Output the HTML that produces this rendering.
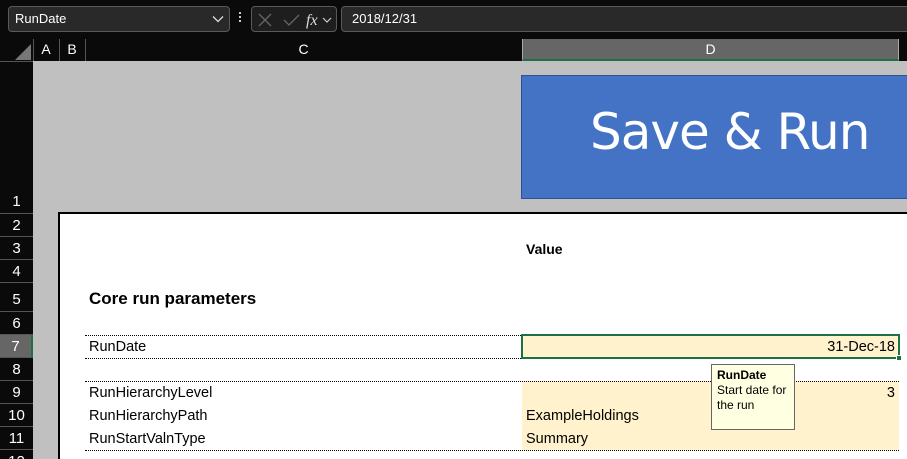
<!DOCTYPE html><html><head><style>
*{margin:0;padding:0;box-sizing:border-box}
html,body{width:907px;height:459px;overflow:hidden}
body{background:#0a0a0a;position:relative;font-family:"Liberation Sans",sans-serif}
.a{position:absolute}
.rn{position:absolute;left:0;width:33px;color:#fff;font-size:15px;text-align:center;border-bottom:1px solid #555}
.t{position:absolute;font-size:14.5px;color:#000;white-space:nowrap}
.dl{position:absolute;left:85px;width:814px;border-top:1px dotted #000}
</style></head><body>
<div class="a" style="left:8px;top:6px;width:222px;height:26px;background:#292929;border:1px solid #5a5a5a;border-radius:4px"></div>
<div class="a" style="left:15px;top:11px;color:#fff;font-size:13px">RunDate</div>
<svg class="a" style="left:212px;top:15px" width="12" height="8"><path d="M1 1.5L6 6.5L11 1.5" stroke="#ddd" fill="none" stroke-width="1.3"/></svg>
<div class="a" style="left:239px;top:12px;width:2px;height:2px;background:#ccc;box-shadow:0 4px #ccc,0 8px #ccc"></div>
<div class="a" style="left:251px;top:6px;width:86px;height:26px;background:#1e1e1e;border:1px solid #5a5a5a;border-radius:4px"></div>
<svg class="a" style="left:256px;top:11px" width="80" height="18"><path d="M3 3L15 15M15 3L3 15" stroke="#666" stroke-width="1.3"/><path d="M28 9L33 14L43 4" stroke="#666" fill="none" stroke-width="1.3"/><text x="50" y="14" font-family="Liberation Serif" font-style="italic" font-size="16" fill="#ddd">fx</text><path d="M67 7L71 11L75 7" stroke="#ccc" fill="none" stroke-width="1.2"/></svg>
<div class="a" style="left:341px;top:6px;width:580px;height:26px;background:#292929;border:1px solid #5a5a5a;border-radius:4px"></div>
<div class="a" style="left:352px;top:11px;color:#fff;font-size:13px">2018/12/31</div>
<svg class="a" style="left:15px;top:44px" width="16" height="16"><path d="M16 0L16 16L0 16Z" fill="#777"/></svg>
<div class="a" style="left:33px;top:39px;width:1px;height:22px;background:#555"></div>
<div class="a" style="left:59px;top:39px;width:1px;height:22px;background:#555"></div>
<div class="a" style="left:85px;top:39px;width:1px;height:22px;background:#555"></div>
<div class="a" style="left:33px;top:41px;width:26px;text-align:center;color:#fff;font-size:14px">A</div>
<div class="a" style="left:59px;top:41px;width:26px;text-align:center;color:#fff;font-size:14px">B</div>
<div class="a" style="left:85px;top:41px;width:437px;text-align:center;color:#fff;font-size:14px">C</div>
<div class="a" style="left:522px;top:39px;width:377px;height:22px;background:#666;border-left:1px solid #aaa;border-right:1px solid #aaa;border-bottom:2px solid #1e7145"></div>
<div class="a" style="left:522px;top:41px;width:377px;text-align:center;color:#fff;font-size:14px">D</div>
<div class="a" style="left:0;top:61px;width:33px;height:1px;background:#555"></div>
<div class="a" style="left:33px;top:61px;width:874px;height:398px;background:#c0c0c0"></div>
<div class="a" style="left:521px;top:75px;width:390px;height:124px;background:#4472c4;border:1px solid #2f528f"></div>
<div class="a" style="left:590px;top:103px;color:#fff;font-family:'DejaVu Sans',sans-serif;font-size:50px;letter-spacing:-1px">Save &amp; Run</div>
<div class="a" style="left:58px;top:212px;width:849px;height:247px;background:#fff;border-left:2px solid #000;border-top:2px solid #000"></div>
<div class="rn" style="top:190px;height:24px;line-height:23px">1</div>
<div class="rn" style="top:214px;height:23px;line-height:23px">2</div>
<div class="rn" style="top:237px;height:23px;line-height:23px">3</div>
<div class="rn" style="top:260px;height:23px;line-height:23px">4</div>
<div class="rn" style="top:283px;height:29px;line-height:33px">5</div>
<div class="rn" style="top:312px;height:23px;line-height:23px">6</div>
<div class="rn" style="top:335px;height:23px;line-height:23px;background:#666;border-right:2px solid #1e7145">7</div>
<div class="rn" style="top:358px;height:23px;line-height:23px">8</div>
<div class="rn" style="top:381px;height:23px;line-height:23px">9</div>
<div class="rn" style="top:404px;height:23px;line-height:23px">10</div>
<div class="rn" style="top:427px;height:23px;line-height:23px">11</div>
<div class="rn" style="top:450px;height:23px;line-height:23px">12</div>
<div class="a" style="left:522px;top:335px;width:377px;height:23px;background:#fff2cc"></div>
<div class="a" style="left:522px;top:381px;width:377px;height:69px;background:#fff2cc"></div>
<div class="dl" style="top:335px"></div><div class="dl" style="top:358px"></div>
<div class="dl" style="top:381px"></div><div class="dl" style="top:450px"></div>
<div class="a" style="left:521px;top:334px;width:379px;height:25px;border:2px solid #1e7145"></div>
<div class="a" style="left:896px;top:355px;width:6px;height:6px;background:#1e7145;border:1px solid #fff"></div>
<div class="t" style="left:526px;top:241px;font-weight:bold;font-size:14px">Value</div>
<div class="t" style="left:89px;top:289px;font-weight:bold;font-size:17px">Core run parameters</div>
<div class="t" style="left:89px;top:339px">RunDate</div>
<div class="t" style="left:600px;top:339px;width:295px;text-align:right">31-Dec-18</div>
<div class="t" style="left:89px;top:385px">RunHierarchyLevel</div>
<div class="t" style="left:800px;top:385px;width:95px;text-align:right">3</div>
<div class="t" style="left:89px;top:408px">RunHierarchyPath</div>
<div class="t" style="left:526px;top:408px">ExampleHoldings</div>
<div class="t" style="left:89px;top:431px">RunStartValnType</div>
<div class="t" style="left:526px;top:431px">Summary</div>
<div class="a" style="left:711px;top:364px;width:84px;height:66px;background:#ffffe1;border:1px solid #666;font-size:12px;line-height:15px;padding:3px 0 0 5px;color:#000"><b>RunDate</b><br>Start date for<br>the run</div>
</body></html>
